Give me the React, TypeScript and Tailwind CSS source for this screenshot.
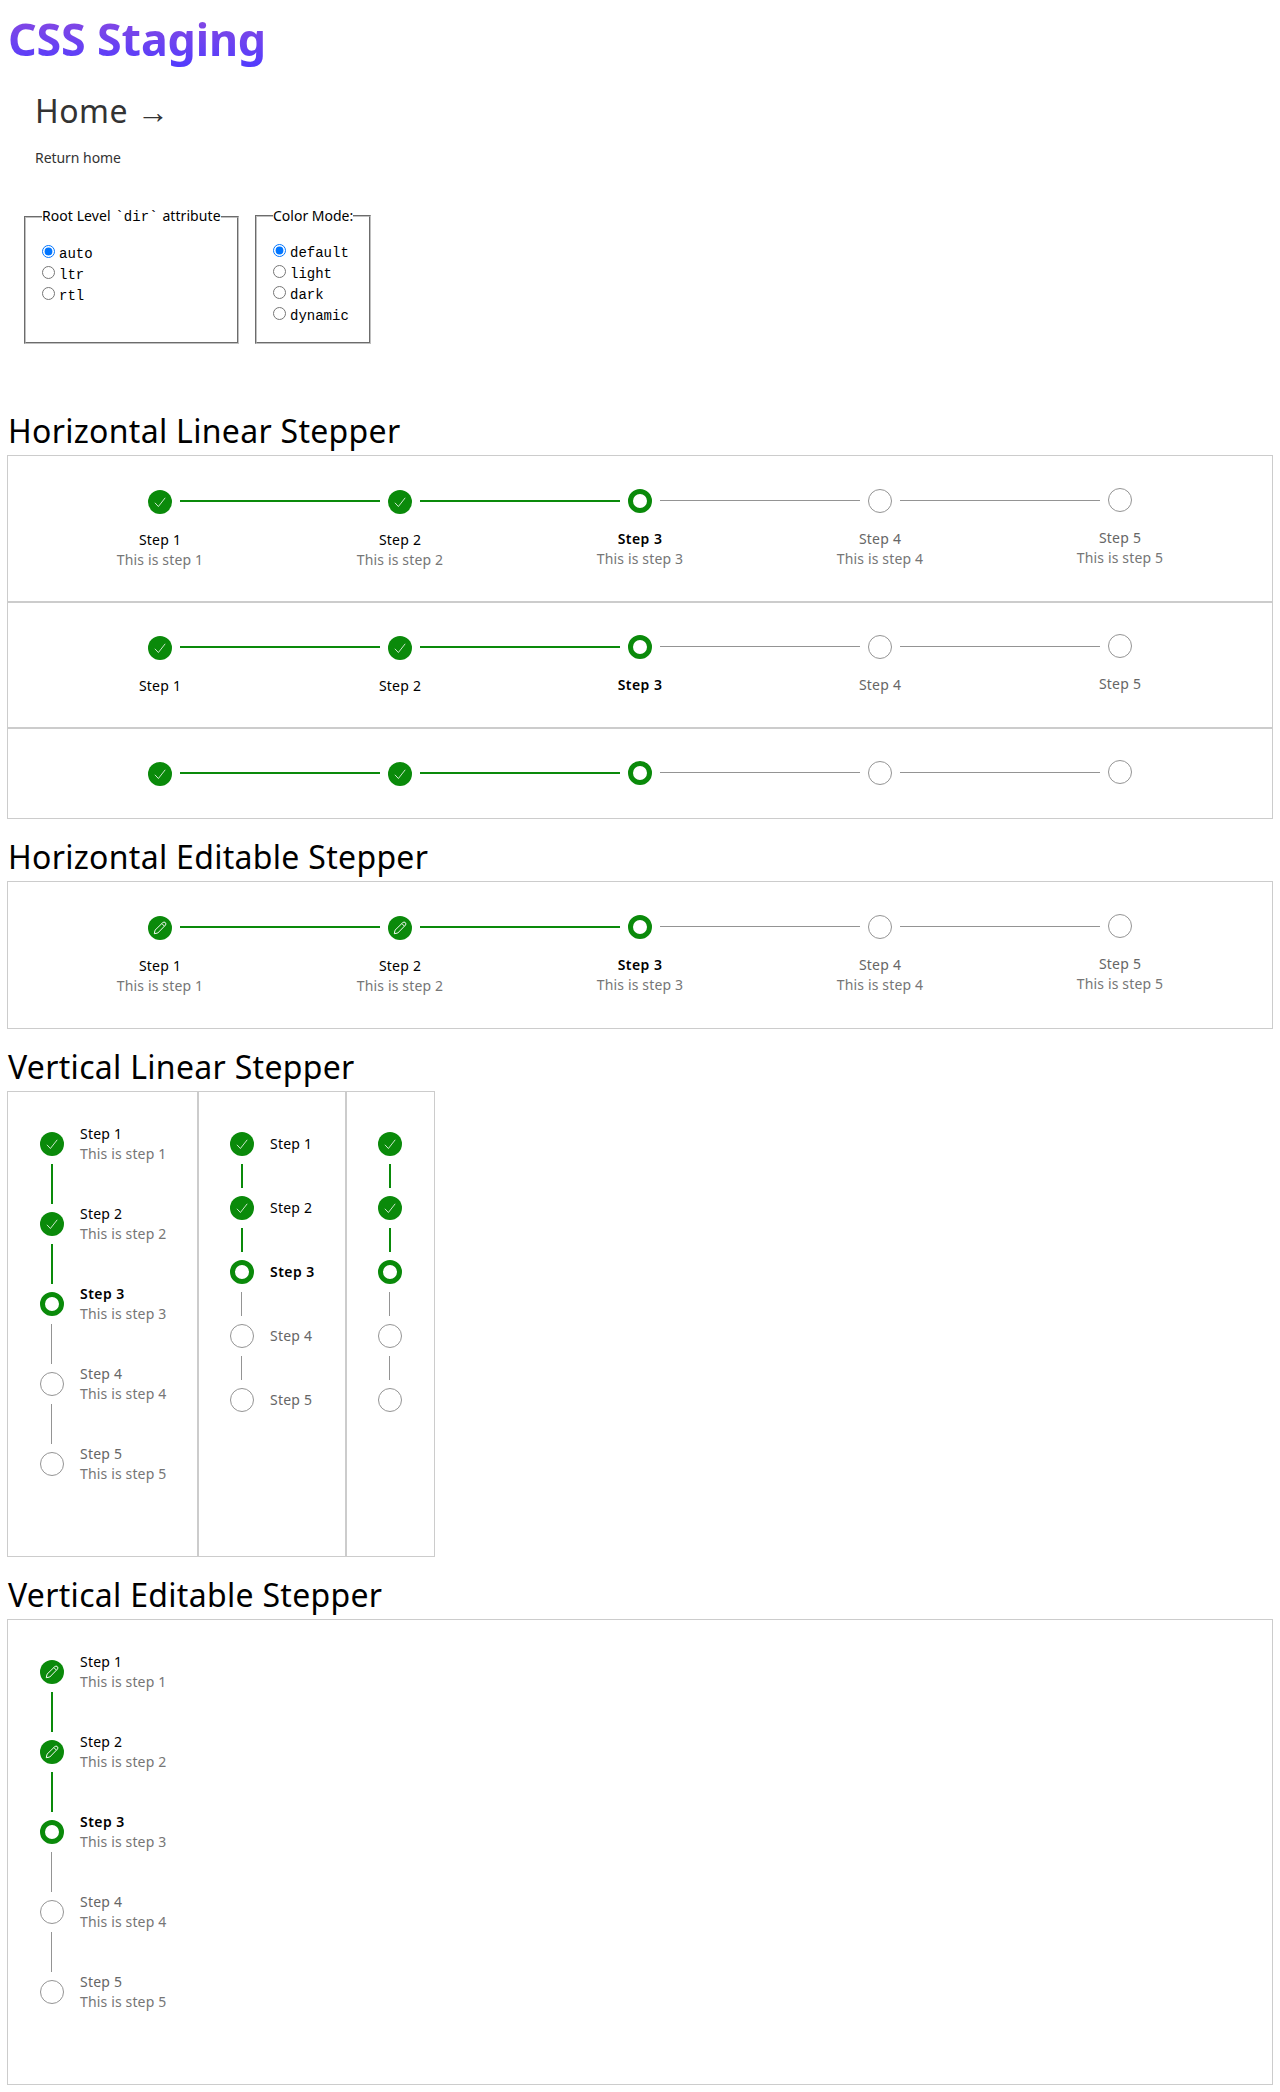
import React from "react";

type Variant = "check" | "edit";
type Detail = "full" | "title" | "none";

const steps = [1, 2, 3, 4, 5];

function Marker({ n, variant }: { n: number; variant: Variant }) {
  if (n === 3) return <div className="size-6 shrink-0 rounded-full border-[5px] border-[#0a8a0a]" />;
  if (n > 3) return <div className="size-6 shrink-0 rounded-full border border-[#949494]" />;
  return (
    <div className="flex size-6 shrink-0 items-center justify-center rounded-full bg-[#0a8a0a]">
      {variant === "check" ? (
        <svg width="12" height="12" viewBox="0 0 12 12" fill="none" stroke="#fff" strokeWidth="0.8">
          <path d="M0.9 6.8 L4.4 10.5 L11.2 1.8" />
        </svg>
      ) : (
        <svg width="14" height="14" viewBox="0 0 14 14" fill="none" stroke="#fff" strokeWidth="0.95" strokeLinejoin="round">
          <path d="M1.3 12.7 L2 9.2 L9.8 1.6 Q10.9 0.8 12 1.3 L12.7 2 Q13.2 3.1 12.4 4.2 L4.8 12 Z M8.9 2.6 L11.4 5.1" />
        </svg>
      )}
    </div>
  );
}

function Labels({ n, detail }: { n: number; detail: Detail }) {
  if (detail === "none") return null;
  const title = n === 3 ? "font-semibold tracking-[0.45px] text-black" : n < 3 ? "text-black" : "text-[#666]";
  return (
    <div className="whitespace-nowrap">
      <div className={title}>Step {n}</div>
      {detail === "full" && <div className="tracking-[0.15px] text-[#767676]">This is step {n}</div>}
    </div>
  );
}

function Horizontal({ variant, detail, className }: { variant: Variant; detail: Detail; className: string }) {
  return (
    <div className={`flex justify-center border border-[#ccc] ${className}`}>
      {steps.map((n) => (
        <div key={n} className="flex w-60 flex-col items-center text-center">
          <div className="flex w-full items-start">
            <div className="w-[108px]" />
            <div className={n < 3 ? "pt-0.5" : n < 5 ? "pt-px" : ""}>
              <Marker n={n} variant={variant} />
            </div>
            {n < 5 && (
              <div className={`-mr-[100px] ml-2 mt-3 w-[200px] shrink-0 ${n < 3 ? "h-0.5 bg-[#0a8a0a]" : "h-px bg-[#949494]"}`} />
            )}
          </div>
          <div className="pt-4">
            <Labels n={n} detail={detail} />
          </div>
        </div>
      ))}
    </div>
  );
}

function Vertical({ variant, detail, className }: { variant: Variant; detail: Detail; className: string }) {
  return (
    <div className={`h-[466px] border border-[#ccc] pt-10 ${className}`}>
      {steps.map((n) => (
        <div key={n} className={`flex gap-4 ${detail === "full" ? "h-20" : "h-16"}`}>
          <div className="flex w-6 flex-col items-center">
            <Marker n={n} variant={variant} />
            {n < 5 && (
              <div className={`my-2 flex-1 ${n < 3 ? "w-0.5 bg-[#0a8a0a]" : "mr-px w-px bg-[#949494]"}`} />
            )}
          </div>
          <div className={detail === "full" ? "-mt-2" : "mt-0.5"}>
            <Labels n={n} detail={detail} />
          </div>
        </div>
      ))}
    </div>
  );
}

function Radios({ name, options }: { name: string; options: string[] }) {
  return (
    <div className="pt-[15px]">
      {options.map((o, i) => (
        <label key={o} className="flex h-[21px] items-start">
          <input type="radio" name={name} defaultChecked={i === 0} className="mt-[3px] mr-1 size-[13px]" />
          <code className="font-['Liberation_Mono',monospace] text-[14px] leading-[24px] tracking-normal">{o}</code>
        </label>
      ))}
    </div>
  );
}

function Heading({ children }: { children: React.ReactNode }) {
  return <h2 className="h-[62px] pl-2 pt-4 text-[32px] leading-[44px] tracking-[0.3px]">{children}</h2>;
}

export default function App() {
  return (
    <div className="h-[2092px] bg-white font-['Noto_Sans',sans-serif] text-[14px] leading-5 tracking-[0.22px] text-black">
      <h1 className="ml-2 w-[257px] bg-linear-to-b from-[#9747d8] to-[#4f39ff] bg-clip-text pt-2 text-[44.8px] leading-[61px] font-bold tracking-[-0.17px] whitespace-nowrap text-transparent">
        CSS Staging
      </h1>
      <div className="h-[137px] pl-[35px] pt-5 text-[#333]">
        <div className="text-[32px] leading-[44px] tracking-[0.5px]">Home →</div>
        <p className="pt-[15px] tracking-[-0.05px]">Return home</p>
      </div>
      <div className="flex h-[187px] gap-4 pl-6 tracking-normal">
        <fieldset className="h-[138px] w-[215px] min-w-0 border-2 border-[#c0c0c0] px-4 [border-style:groove]">
          <legend className="tracking-[0.07px] whitespace-nowrap">
            Root Level <code className="mr-px ml-px font-['Liberation_Mono',monospace]">`dir`</code> attribute
          </legend>
          <Radios name="dir" options={["auto", "ltr", "rtl"]} />
        </fieldset>
        <fieldset className="h-[138px] w-[116px] min-w-0 border-2 border-[#c0c0c0] px-4 [border-style:groove]">
          <legend className="whitespace-nowrap">Color Mode:</legend>
          <Radios name="mode" options={["default", "light", "dark", "dynamic"]} />
        </fieldset>
      </div>
      <Heading>Horizontal Linear Stepper</Heading>
      <div className="mx-[7px]">
        <Horizontal variant="check" detail="full" className="h-[147px] pt-8" />
        <Horizontal variant="check" detail="title" className="h-[126px] pt-[31px]" />
        <Horizontal variant="check" detail="none" className="h-[91px] pt-[31px]" />
      </div>
      <Heading>Horizontal Editable Stepper</Heading>
      <div className="mx-[7px]">
        <Horizontal variant="edit" detail="full" className="h-[148px] pt-8" />
      </div>
      <Heading>Vertical Linear Stepper</Heading>
      <div className="ml-[7px] flex">
        <Vertical variant="check" detail="full" className="w-[191px] pl-8" />
        <Vertical variant="check" detail="title" className="w-[148px] pl-[31px]" />
        <Vertical variant="check" detail="none" className="w-[89px] pl-[31px]" />
      </div>
      <Heading>Vertical Editable Stepper</Heading>
      <div className="mx-[7px]">
        <Vertical variant="edit" detail="full" className="pl-8" />
      </div>
    </div>
  );
}
